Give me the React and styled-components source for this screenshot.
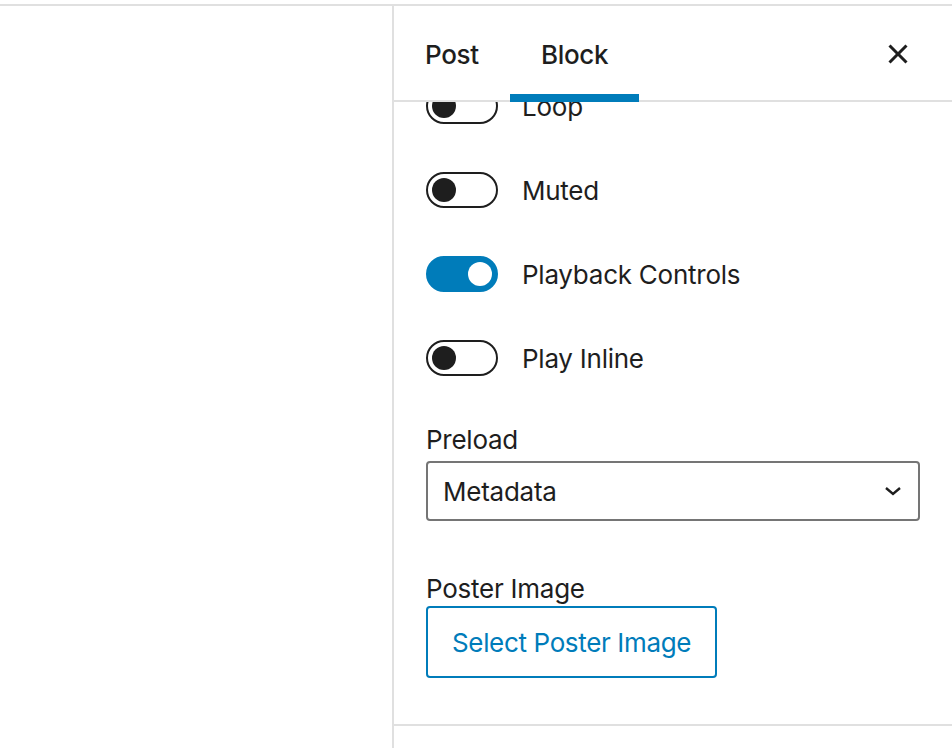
import React, { useLayoutEffect, useRef } from "react";
import styled, { createGlobalStyle } from "styled-components";

const GlobalStyle = createGlobalStyle`
  html, body { margin: 0; padding: 0; background: #fff; }
  body {
    font-family: Inter, "Noto Sans", "Liberation Sans", sans-serif;
    color: #1e1e1e;
    letter-spacing: -0.25px;
    -webkit-font-smoothing: antialiased;
  }
  * { box-sizing: border-box; }
`;

const Page = styled.div`
  height: 748px;
  padding-top: 4px;
  display: flex;
  flex-direction: column;
  background: #fff;
`;

const Frame = styled.div`
  flex: 1;
  min-height: 0;
  display: flex;
  border-top: 2px solid #e0e0e0;
`;

const Canvas = styled.main`
  flex: 1;
`;

const Sidebar = styled.aside`
  width: 560px;
  border-left: 2px solid #e0e0e0;
  display: flex;
  flex-direction: column;
  min-height: 0;
`;

const SidebarHeader = styled.div`
  height: 96px;
  flex: none;
  display: flex;
  align-items: stretch;
  padding-right: 30px;
  border-bottom: 2px solid #e0e0e0;
  position: relative;
  z-index: 1;
  background: #fff;
`;

const Tab = styled.button`
  position: relative;
  border: 0;
  background: transparent;
  padding: 2px 31px 0;
  margin: 0;
  font-family: inherit;
  font-size: 26px;
  letter-spacing: -0.3px;
  font-weight: 500;
  color: #1e1e1e;
  cursor: pointer;

  &::after {
    content: "";
    position: absolute;
    left: 0;
    right: 0;
    bottom: -2px;
    height: 8px;
    background: ${(p) => (p.$active ? "#007cba" : "transparent")};
  }
`;

const CloseButton = styled.button`
  margin-left: auto;
  align-self: center;
  margin-top: 2px;
  width: 48px;
  height: 48px;
  border: 0;
  padding: 0;
  background: transparent;
  display: flex;
  align-items: center;
  justify-content: center;
  color: #1e1e1e;
`;

const Scroller = styled.div`
  flex: 1;
  min-height: 0;
  overflow: hidden;
`;

const PanelBody = styled.section`
  padding: 32px 32px 46px;
  border-bottom: 2px solid #e0e0e0;
`;

const PanelToggle = styled.button`
  width: 100%;
  height: 96px;
  padding: 0 32px;
  border: 0;
  border-bottom: 2px solid #e0e0e0;
  background: #fff;
  display: flex;
  align-items: center;
  justify-content: space-between;
  font-family: inherit;
  font-size: 26px;
  font-weight: 500;
  color: #1e1e1e;
  text-align: left;
`;

const ToggleRow = styled.label`
  display: flex;
  align-items: center;
  gap: 24px;
  height: 36px;
  margin-bottom: 48px;
  font-size: 26px;
`;

const Track = styled.span`
  position: relative;
  width: 72px;
  height: 36px;
  flex: none;
  border-radius: 18px;
  border: 2px solid ${(p) => (p.$on ? "#007cba" : "#1e1e1e")};
  background: ${(p) => (p.$on ? "#007cba" : "#fff")};
`;

const Thumb = styled.span`
  position: absolute;
  top: 4px;
  left: ${(p) => (p.$on ? "40px" : "4px")};
  width: 24px;
  height: 24px;
  border-radius: 50%;
  background: ${(p) => (p.$on ? "#fff" : "#1e1e1e")};
`;

const FieldLabel = styled.div`
  font-size: 26px;
  line-height: 31px;
  margin-bottom: ${(p) => p.$gap}px;
`;

const SelectBox = styled.div`
  height: 60px;
  border: 2px solid #757575;
  border-radius: 4px;
  display: flex;
  align-items: center;
  padding: 0 16px 0 15px;
  font-size: 26px;
  margin-bottom: 52px;
`;

const SelectValue = styled.span`
  flex: 1;
`;

const Group = styled.div``;

const OutlineButton = styled.button`
  height: 72px;
  padding: 0 24px;
  border: 2px solid #007cba;
  border-radius: 4px;
  background: #fff;
  color: #007cba;
  font-family: inherit;
  font-size: 26px;
  letter-spacing: -0.35px;
  cursor: pointer;
`;

const Chevron = ({ up }) => (
  <svg width="18" height="10" viewBox="0 0 18 10" fill="none">
    <path d={up ? "M2 8l7-6 7 6" : "M2 2l7 6 7-6"} stroke="#1e1e1e" strokeWidth="2.4" />
  </svg>
);

const Toggle = ({ label, on }) => (
  <ToggleRow>
    <Track $on={on}>
      <Thumb $on={on} />
    </Track>
    <span>{label}</span>
  </ToggleRow>
);

const toggles = [
  { label: "Autoplay", on: false },
  { label: "Loop", on: false },
  { label: "Muted", on: false },
  { label: "Playback Controls", on: true },
  { label: "Play Inline", on: false },
];

export default function App() {
  const scrollRef = useRef(null);

  useLayoutEffect(() => {
    if (scrollRef.current) scrollRef.current.scrollTop = 130;
  }, []);

  return (
    <>
      <GlobalStyle />
      <Page>
        <Frame>
          <Canvas />
          <Sidebar>
            <SidebarHeader>
              <Tab>Post</Tab>
              <Tab $active>Block</Tab>
              <CloseButton aria-label="Close settings">
                <svg width="48" height="48" viewBox="0 0 24 24" fill="currentColor">
                  <path d="M12 13.06l3.712 3.713 1.061-1.06L13.061 12l3.712-3.712-1.06-1.06L12 10.938 8.288 7.227l-1.061 1.06L10.939 12l-3.712 3.712 1.06 1.061L12 13.061z" />
                </svg>
              </CloseButton>
            </SidebarHeader>
            <Scroller ref={scrollRef}>
              <PanelBody>
                {toggles.map((t) => (
                  <Toggle key={t.label} label={t.label} on={t.on} />
                ))}
                <Group>
                  <FieldLabel $gap={6}>Preload</FieldLabel>
                  <SelectBox>
                    <SelectValue>Metadata</SelectValue>
                    <Chevron />
                  </SelectBox>
                </Group>
                <Group>
                  <FieldLabel $gap={2}>Poster Image</FieldLabel>
                  <OutlineButton>Select Poster Image</OutlineButton>
                </Group>
              </PanelBody>
              <PanelToggle>
                Advanced
                <Chevron />
              </PanelToggle>
            </Scroller>
          </Sidebar>
        </Frame>
      </Page>
    </>
  );
}
